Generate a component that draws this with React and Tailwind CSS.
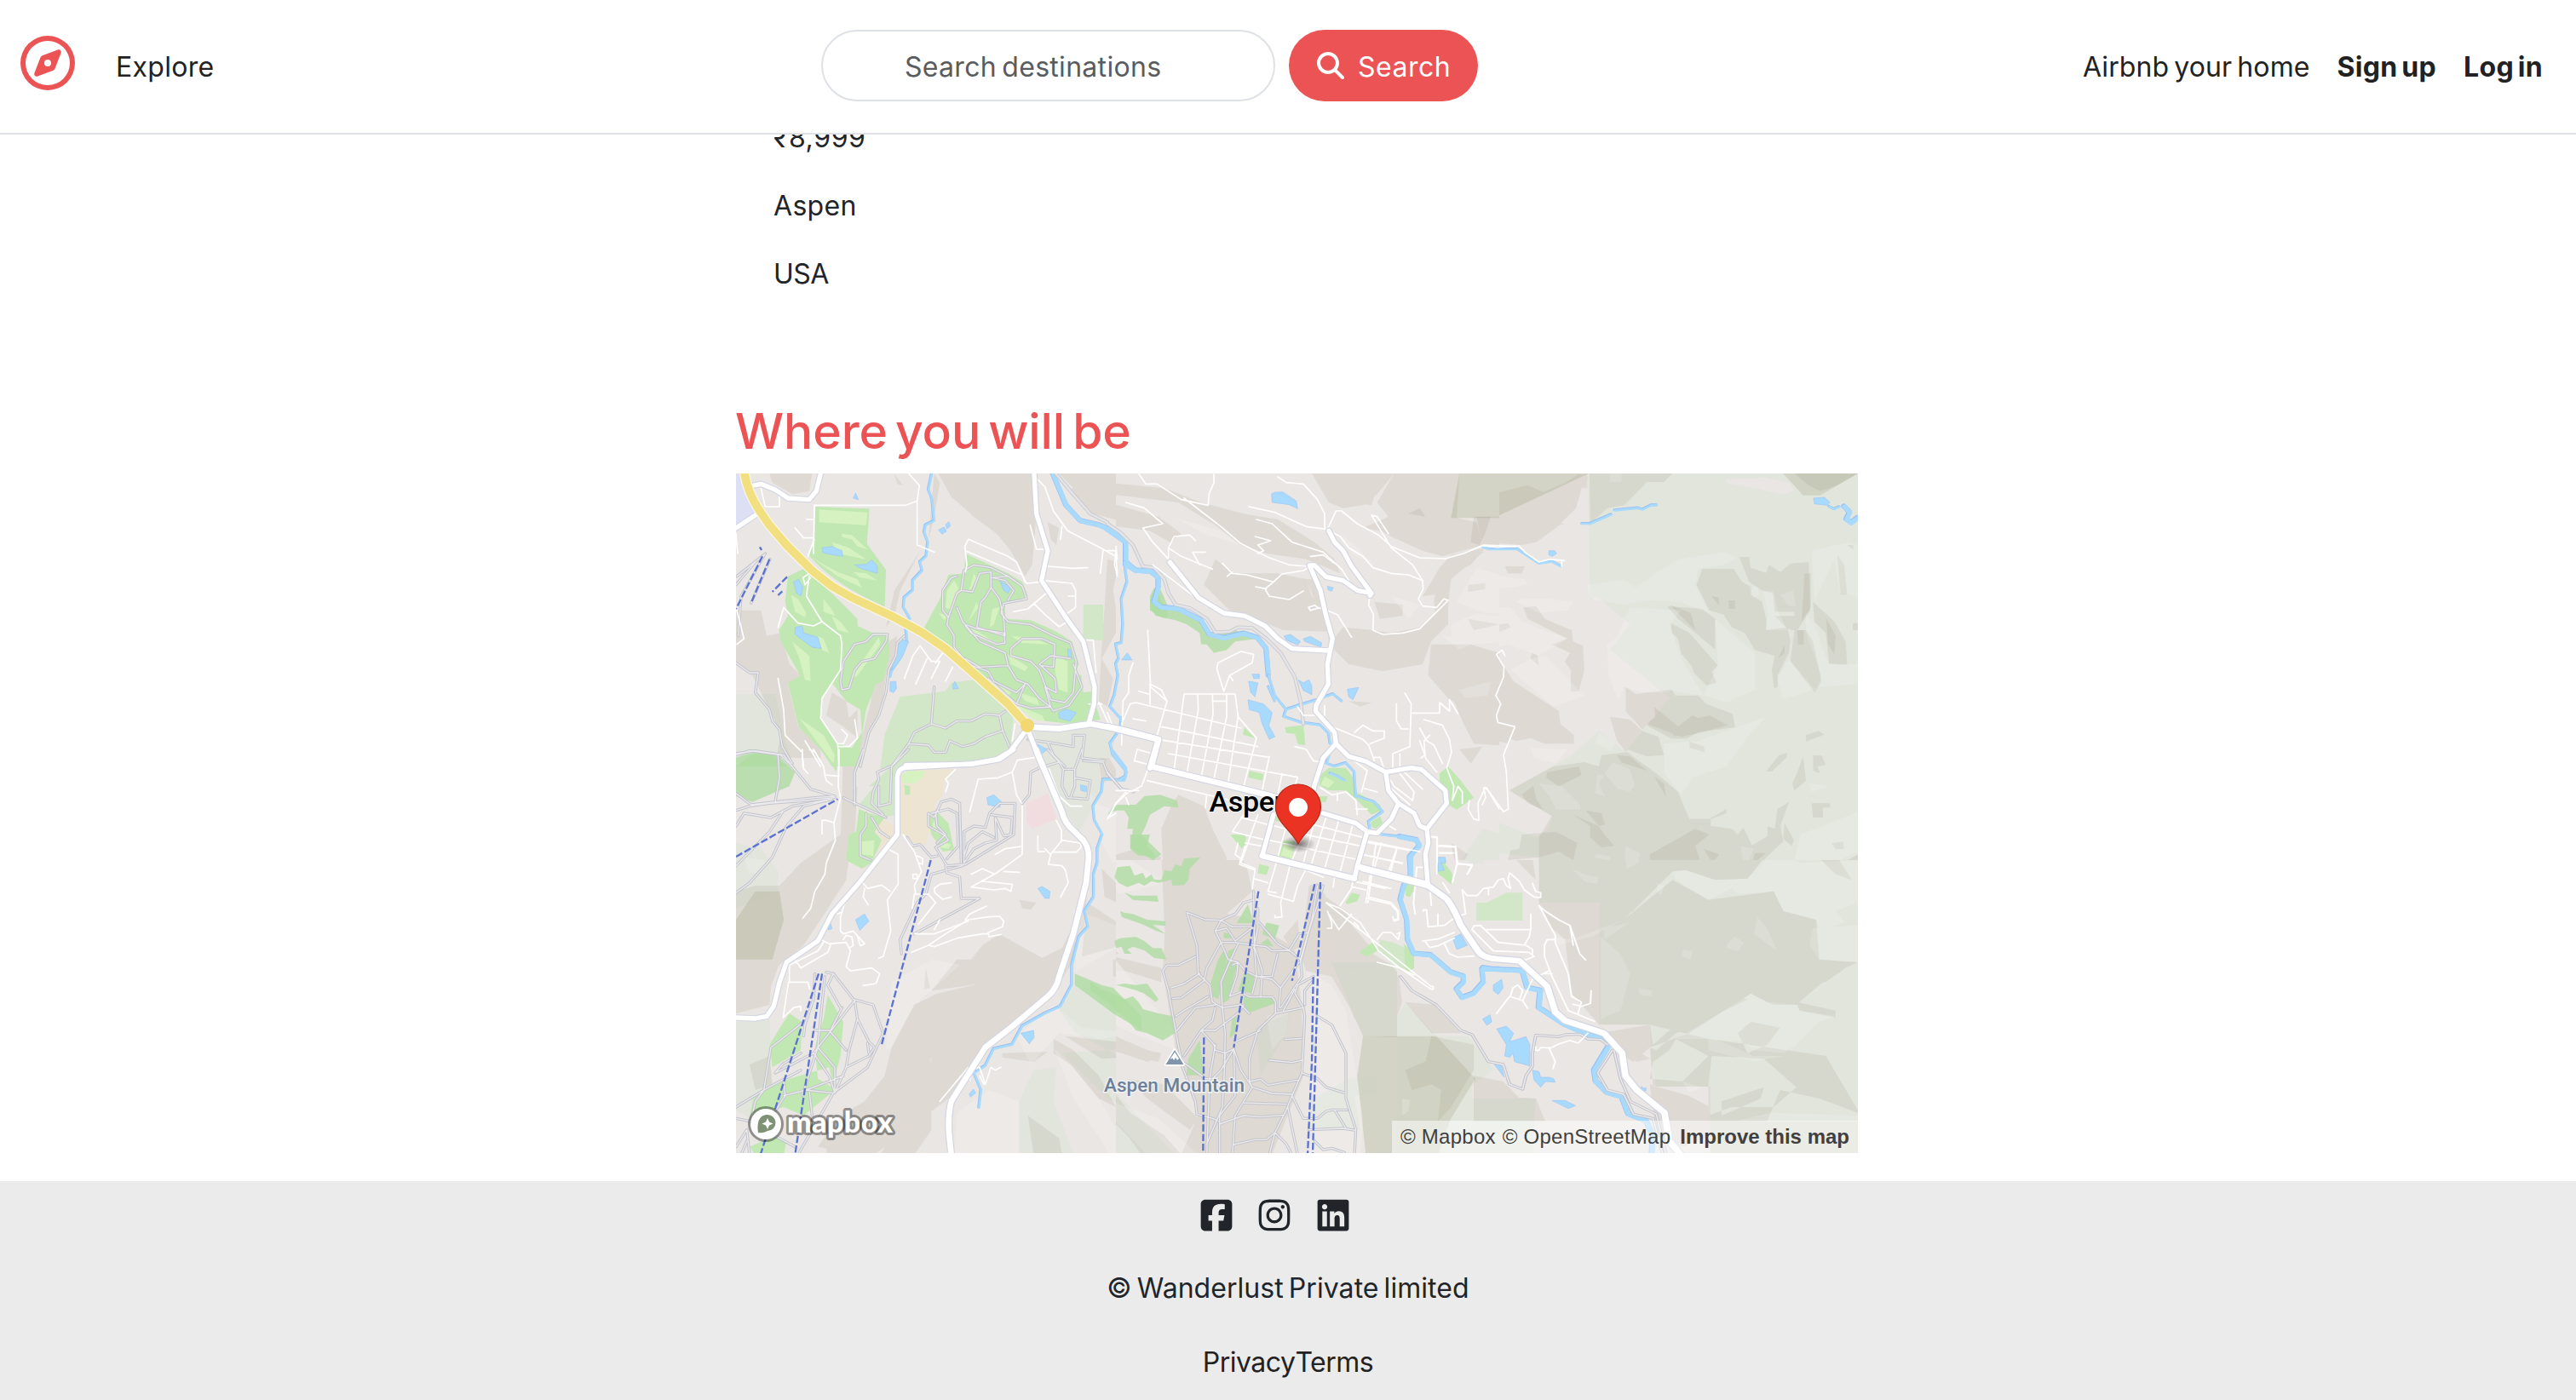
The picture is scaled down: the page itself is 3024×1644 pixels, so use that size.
import { FaRegCompass, FaMagnifyingGlass, FaSquareFacebook, FaInstagram, FaLinkedin } from "react-icons/fa6";

// Each survey sheet has its own local grid; the transform places it on the map.
const SHEETS = {
  nw: "translate(850 460) scale(.33333)",
  n: "translate(1300 540) scale(.33333)",
  ne: "translate(1740 540) scale(.33333)",
  sw: "translate(860 880) scale(.33333)",
  s: "translate(1280 980) scale(.33333)",
  se: "translate(1600 980) scale(.38265 .33333)",
};

// The part of the map that each sheet's terrain covers: x, y, width, height.
const CELLS = {
  nw: [864, 556, 446, 334],
  n: [1310, 556, 450, 454],
  ne: [1760, 556, 421, 454],
  sw: [864, 890, 446, 464],
  s: [1310, 1010, 330, 344],
  se: [1640, 1010, 541, 344],
};

function Layer({ paths, bounded, ...attrs }) {
  return (
    <g {...attrs}>
      {Object.entries(paths).map(([sheet, d]) => (
        <g key={sheet} clipPath={bounded ? `url(#cell-${sheet})` : undefined}>
          <path transform={SHEETS[sheet]} d={d} />
        </g>
      ))}
    </g>
  );
}

const reserve = {
  ne: "M373 48L380 497 402 480 522 580 450 668 660 838 505 1028 412 955 310 1045 95 1165 245 1255 235 1300 190 1330 40 1272 0 1300V1380L195 1400 200 1500H1323V48Z M855 68L862 82 1065 122 1098 108 1080 80 1000 62Z",
  n: "M1320 1300L1440 1330V1500H1330L1240 1420Z",
  se: "M250 0L330 105 370 100V65L540 85V240H725V670H880L885 795 900 888H1065V1128H1518V0Z M130 590L225 710H320L345 740 400 830 335 880V930H530L520 1128H0V900L80 700Z",
  sw: "M12 960L130 950 140 1240 60 1300 12 1270Z M12 330L100 350 160 430 160 500 12 560Z M1080 0H1340L1290 60 1300 150 1270 200 1220 290 1160 200Z M1205 830L1300 850 1440 980V1100L1380 1090 1210 1000 1150 920Z M1060 1130L1140 1120 1130 1240 1200 1428H1010V1240Z M1160 1070L1440 1050V1280L1320 1230Z",
  nw: "M42 1065H180L200 1150 240 1320H42Z M1090 1190L1290 1185 1380 1200 1360 1320H1130Z M1490 1110H1530L1520 1210 1475 1200Z",
  s: "M850 450H1120L1240 600 1200 710H960L930 640Z M0 850L80 900 300 1128H0Z M770 940L910 860 1010 850V920H930L950 1040 770 1030Z M580 680L700 630 690 700 600 850Z",
};
const oldForest = {
  ne: "M0 48H375L40 205H0Z M1323 48H1060L1130 125H1190Z",
  n: "M1240 48H1440V205H1210Z",
  s: "M960 710H1235L1380 870 1290 1128H970L940 850Z M1130 720L1230 740 1350 860 1240 980 1180 940 1060 1090 1000 960 1060 920 1020 880Z",
  se: "M0 710H225L345 860 270 1000 230 1128H0Z",
  sw: "M12 600L80 500H165L180 600 140 740 12 740Z",
};

const relief = {
  nw: "M755 288H1090L1100 430 1085 610 1060 650 1010 560 960 500 880 440 800 370Z M885 288H1085L1070 560 1040 520 980 400Z M1000 290H1080L1070 380 1040 380Z M1020 440L1080 460V570L1050 540Z M160 288H310L300 350 240 360 170 320Z M740 288L760 320 740 440 720 520 730 400Z M690 560L660 620 620 700 600 790 570 830 600 700 640 640Z M42 770L130 770 150 860 200 850 230 960 270 1000 225 1030 260 1180 340 1250V1320H180L200 1200 100 1000 42 960Z M80 860L190 880 240 1000 200 1020 90 930Z M580 880L610 860 600 940 570 1000 560 1080 530 1170 490 1250 480 1320H440L490 1200 520 1080 550 980Z M520 1060L550 1020 540 1130 515 1120Z M1180 288H1560V400L1470 390 1330 340 1240 350Z M1240 300L1330 330 1560 430V490L1450 470 1300 430 1220 360Z M1350 590L1390 600 1370 700 1390 830 1330 940 1370 1010 1350 1110 1320 1090 1330 900 1340 760Z M1140 460L1180 480 1170 540 1150 520Z M380 1060L430 1090 440 1150 470 1120V1220L420 1180 360 1140Z M600 290l30 40-20-5z M1390 470l40 30-20 20z",
  n: "M0 80L200 100 330 150 480 190 600 210 730 290 800 350 820 400 700 350 560 330 470 300 380 230 250 150 0 120Z M210 110L480 200 540 270 480 300 400 240Z M0 150L180 200 260 260 220 290 150 250 0 230Z M380 350L450 400 600 400 700 420 720 480 770 540 780 605 620 600 520 560 430 530 340 440Z M450 440L600 490 640 540 600 570 500 540Z M700 420H740L770 520 780 650 830 590 940 600 1000 610 1100 590 1200 500V580L1140 640 1110 720 970 745 850 720 800 670Z M720 48H1010L950 120 900 160 830 170 780 150Z M830 90L960 60 930 160 860 150Z M1010 48H1240L1230 200 1320 300 1180 340 1110 320 1020 280 960 250 900 240 990 200 950 150Z M1040 170L1210 130 1210 200 1300 220 1320 300 1180 310 1070 280 1150 250Z M1320 305L1440 300V200H1300Z M1210 335L1330 310 1280 370 1220 400 1190 470 1110 480 1170 380Z M1200 370L1330 320 1210 420 1195 560 1160 600 1150 490Z M940 500L1040 510V550L960 560Z M1140 650H1280L1440 700V900L1380 940 1300 900 1200 840 1130 760Z M1280 720L1340 680 1380 700 1370 770 1290 740Z M1180 770L1240 760V800L1180 810Z M1220 850L1360 880 1440 950V1010L1290 1000 1250 920Z M880 670L960 620 1090 640 1000 690Z M850 850L930 855 890 870Z M1270 560l110 20-90 20z M1270 440l60-5v20l-60 10z M250 1180L340 1220 370 1300 420 1400 400 1500H200L190 1300 220 1230Z M240 1200L300 1260 330 1400 300 1500H190L200 1330Z M100 1370L190 1400 140 1500H0V1400Z M0 690l20-20 10 90-30 90z M420 430l120 40v30l-90-20z M1240 1020l80-10-40 60z M1210 1350l60 40-40 60z",
  ne: "M378 48H670L640 78H580L530 130 500 160 440 170 380 225Z M0 205L370 48V100H350L330 170 260 240 190 290 140 300 0 290Z M0 130L160 90 230 120 340 50 375 60 260 190 180 250 90 260 60 240 0 230Z M80 240L160 250 200 220 290 225 170 260 150 290 70 265Z M230 160L320 175 270 205Z M145 520L190 515 220 560 315 600 320 640 355 655 360 740 340 815H312V740L290 710 310 680 245 650 300 630 160 560Z M0 590L90 575 100 590 0 630Z M80 375h70l-10 25h-50z M110 780L270 885 275 930 323 970V1000L220 1000 170 980 120 990 0 950V690L60 700Z M95 815L180 850 200 890 265 930V950L190 940 160 890 120 920 60 860Z M0 930L95 940V1000L0 980Z M0 690L50 700 20 750 0 745Z M90 900h30v20h-30z M505 800L540 825 660 810 660 838 565 950 505 885Z M450 905L520 915 565 955 505 1028 475 990Z M175 680l20 10 5 35-30-25z M775 384H885L915 430 950 450 945 475 985 500 1000 560 1000 600 1075 590 1085 640 1080 680 1040 760 1040 800 1028 805 1020 740 1030 690 960 670 925 610 880 590 850 545 800 530 755 440Z M905 342H940L945 380 1000 398 1010 370 1050 395 1085 365 1150 360 1155 530 1110 600 1090 600 1070 590 1030 550H1100V535H1030L1025 470 985 460 940 430Z M650 515L775 525 820 560V668L740 600 690 560Z M665 575L730 610 800 690 830 725 808 745 825 785 790 795 745 750 740 730 700 680 690 630 668 610Z M1165 500L1240 570 1280 640 1285 722 1222 718 1210 610 1170 570Z M1140 600L1165 640 1195 780 1172 820 1085 710 1100 600Z M640 815L668 810 680 830 760 830 790 860 882 895 890 942 760 960 720 982H665L580 935Z M512 1020L560 955 620 975 640 1040 580 1045Z M730 992L780 1010 785 1030 730 1015Z M250 1080L360 1065 410 1080 420 1040 510 1030 620 1110 690 1170 710 1220 730 1265H800L860 1230V1245L805 1265 805 1290 880 1300 900 1320 920 1295 950 1358 1005 1325V1290L1030 1300 1040 1230 1080 1205 1050 1290 1060 1345 1000 1400 940 1480 800 1475 700 1445 600 1500H200V1330L245 1255 95 1165Z M1250 335L1275 370 1285 475H1262Z M1140 970L1185 955 1205 968 1140 992Z M1000 1098L1045 1040 1075 1032 1070 1050 1020 1098Z M1130 1045L1140 1130 1100 1165 1092 1140 1110 1100Z M1165 1042H1195L1210 1075 1180 1080 1190 1105 1165 1095Z M1160 1210H1225V1225H1200L1200 1260 1165 1260Z M1065 1280L1098 1340 1090 1360 1060 1335Z M1230 1350l40-5 5 25-30 2z M1323 1390L1250 1430 1220 1500H1323Z M1285 300h22v18z M1305 575h18v25h-18z",
  sw: "M12 500L80 480 165 480 240 400 380 300 400 150 440 130 430 300 410 380 400 460 310 600 250 690 140 780 130 900 12 930Z M12 600L165 500 310 420 400 330 400 450 290 620 180 740H12Z M165 500L310 440 330 560 240 600 180 700Z M12 740L170 740 130 850 12 830Z M390 0H460L430 100 410 200 420 340 380 330 385 170Z M1160 700L1230 560 1250 480 1240 620 1190 760 1130 860 1100 880 1090 735Z M1090 735L1110 880 990 970 850 1090 760 1230 600 1350 500 1428H330L340 1330 430 1260 520 1210 560 1050 640 900 720 860 850 830 880 690 1010 690Z M1100 740L1080 830 960 920 880 1020 790 1040 700 1080 680 1180 560 1230 500 1290 440 1270 560 1120 700 1100 700 1050 850 850 1060 745Z M840 860L1000 800 1090 740 1080 830 960 910 870 1010 820 1000Z M350 1330L440 1290 460 1350 350 1410 300 1400Z M880 690L940 650 1010 690 900 800 840 830 700 850 790 740 840 740Z M560 1360L700 1250V1340L640 1428H520Z M680 770l15 70-20 5z M950 1070L1110 1065 1060 1100 950 1085Z M1130 1020L1200 1060 1290 1150 1350 1260 1290 1230 1190 1110 1130 1070Z M1170 1010L1440 1040V1080L1300 1090Z M1040 1290L1150 1370 1160 1428H1060Z M1310 0L1360 90 1300 120 1290 40Z M1300 420L1400 520 1440 530V580L1310 520Z M1250 540L1340 600 1430 640 1340 700 1230 730Z M1340 740L1440 760V800H1340Z M1010 530l60 10-20 25-30-5z M60 1110L130 1080 140 1180 80 1200Z",
  s: "M245 0H480L550 110 570 200 480 280 540 290 720 400 745 620 750 850 640 1128H320L380 990 300 760 255 480 270 200Z M250 60L330 40 400 130 350 250 370 430 290 470 260 300Z M265 150L340 180 340 270 370 430 260 470Z M300 480L390 500 410 600 400 690 330 790 300 640Z M410 480L460 390 480 440 430 560Z M640 600L590 680 520 720 510 680 560 640Z M500 700L650 640 600 700 530 790Z M740 650L745 840 640 1050 520 1080 540 950 600 850 660 800 700 720Z M600 840L740 780 720 880 640 910Z M770 180L800 170 830 220 900 270 960 400 1010 480 850 500 760 480 740 430Z M830 290L930 330 990 400 940 440 860 400Z M850 500L1020 480 1140 500 1230 600 1340 710 1230 720 960 710 920 620Z M940 600L1060 570 1090 640 1130 700 960 705Z M1050 620L1080 650 1040 700 1010 680Z M1170 650l30 20-30 40z M960 400L1060 460 1100 510 1000 560 900 460Z M1350 840L1440 880V1000H1300Z M0 840L60 880 140 980 260 1060 320 1128H180L60 960Z M130 860L260 880 380 1000 350 1040 200 930Z M30 410L60 380 100 420 60 430Z M80 430L250 470 250 520 120 480Z M0 670L110 720 250 780 200 800 80 760 0 740Z M150 750L250 770 240 800 180 790Z M60 990L160 1020 170 1100Z M680 360l50-60 10 100-30 5z M870 500L900 470 950 620 930 650Z M300 0h60l20 60-80 30z",
  se: "M420 0H1340L1260 40 1180 155 1080 160 990 125 950 130 800 300 725 330V245H540V85L370 65Z M800 300L950 160 1060 230 1260 200 1290 270 1390 300 1400 440 1518 450 1240 590 1190 560 1000 700 880 750 890 888H1065V1128H1518V970L1420 780 1300 760 1060 720 880 670H725V330Z M460 0H640L660 60 600 110 560 110 540 90 470 40Z M330 0L420 0 470 60 520 80 530 160 470 90 370 60Z M1060 0L980 60 880 190 800 300 720 340 730 250 780 230 820 120 860 90 930 0Z M970 70L1020 60 980 110 920 130 860 210 830 270 780 290 840 190 860 110Z M990 200L1080 320 1090 440 1040 400 920 380 860 320 880 300 840 270 950 230Z M860 420L960 440 1060 480 1070 520 1140 540 1130 580 1080 640 1000 650 900 570 870 520Z M1140 570L1180 580 1040 660 960 700 900 760 880 750 940 690 1040 650 1060 600Z M740 370L790 420 830 450 790 500 850 600 830 660 790 620 730 530Z M1060 480L1170 440 1260 450 1330 520 1370 500 1450 480 1330 600H1260L1190 560Z M1360 490L1480 470 1420 520 1360 530Z M1150 220H1260V270L1330 290 1340 330 1220 320 1160 260Z M1240 290L1290 370 1260 400 1220 330Z M960 720L1060 780 980 870 880 860 890 800 940 760Z M1070 780L1230 790 1280 840 1330 890 1260 960 1130 960 1060 990V880Z M1100 940L1230 890 1220 930 1100 990Z M1280 900L1400 930 1518 980V1010H1240Z M1330 590L1450 620 1450 645 1340 620Z M1190 660L1280 680 1240 740 1180 770 1150 700Z M880 880L900 888 1000 920 1065 960V1060L980 1100 900 1060Z M725 700L880 670 890 740 830 800 800 780Z M540 240L725 245V670L640 560 620 370 580 330Z M650 380L725 360V560L640 470Z M540 90L700 100 660 240H540Z M0 450L110 500 120 590 80 720 0 850Z M130 590L220 600 300 700H210Z M210 710L340 740 340 830 270 960 230 1010 240 900 180 860Z M130 830L190 800 240 870 150 900Z M340 850L430 870 490 940 530 930 560 1010 340 1010Z M400 920L530 930V1000L420 1010Z M730 680L880 790 840 800 780 740Z M1380 60L1450 70 1500 160 1450 140Z M1170 0H1250L1230 50 1180 30Z",
};
const reliefDeep = {
  ne: "M605 870L690 940 740 900 760 910 800 900 865 935 750 965 700 975 580 930 610 905Z M665 955l50 15-40 3z M230 1100L340 1080 350 1110 270 1150 225 1120Z M320 1250L410 1290 430 1320 465 1360 420 1365 380 1330 380 1290Z M365 1235l55 10 12 40-20 5z M480 1500L480 1440 590 1420 590 1390 750 1300 800 1320 750 1360 780 1450 690 1440 600 1500Z M600 1410L650 1370 720 1390 750 1430 690 1440 600 1500 560 1500Z M140 1320L260 1310 335 1350 320 1410 270 1380 200 1400 90 1410 100 1375 130 1370Z M1135 400L1157 400V520L1125 570Z M1110 600h22v50h-20z M1100 48H1323L1250 90 1190 110 1150 90Z M1150 48H1300L1190 80Z M660 510L735 540 750 600 700 550Z M1212 560L1245 620 1240 685 1218 650Z M140 1180L180 1148 190 1195 215 1232 160 1210Z M475 1040L520 1045 580 1095 490 1065Z M605 1115L640 1140 648 1188Z M780 1370L835 1390 810 1420Z M950 1425L960 1385 1000 1385Z M868 495h22v30h-22z M808 480l25 5v28z M1042 700L1065 650 1065 680Z M850 1458h80v22h-60z",
  n: "M1290 200H1350L1330 260 1310 300 1280 290Z M1060 190L1100 170 1120 200Z",
};
const highlights = {
  ne: "M0 400L150 420 160 440 60 455 0 430Z M140 490L240 490 320 500 300 530 200 540 120 500Z M0 520H100L140 570 300 630 200 690 90 650 0 680Z M100 740L170 700 220 690 360 830 250 870Z M440 650L520 590 660 820 560 820 500 800 480 850 445 760Z M370 440L500 420 540 450 640 380 690 350 850 325 900 345 850 370 760 385 750 440 800 540 700 500 590 495 500 510 380 490Z M520 520L700 530 660 580 700 700 780 830 640 810 455 668Z M820 560L960 680 960 810 860 855 780 830 830 720Z M1160 320L1290 290 1323 300V480L1260 470 1240 350 1170 500Z M1140 540L1170 580 1220 720 1323 720V790L1190 800 1060 845 1040 770 1080 700 1175 815 1195 760 1140 610Z M585 630L620 615 650 680 690 680 685 710 640 700 580 690Z M640 1000L760 990 1000 905 940 970 860 1080 740 1120 700 1180 640 1100Z M200 1140L280 1150 345 1215V1232H260L240 1190Z M460 1065L520 1090 538 1150 520 1168 480 1160 430 1105Z M405 1110h25l-20 30 22 45-35-10z M505 1360L555 1385 550 1440 500 1430Z M910 1360L955 1370 935 1430 920 1428Z M400 1388l50 8v14l-55-8z M315 1440L370 1460 405 1470 400 1495 360 1485Z M1150 1140L1220 1150 1160 1170Z M1120 1320L1323 1240V1380L1260 1410H1100Z M410 960L470 1000 450 1025 400 1000Z M170 1015L300 1020 260 1070 180 1050Z M990 462L1025 460 1040 530 1070 590 1075 600 1000 600 1005 540Z M1050 475L1095 460 1105 515 1080 515Z M940 450l30-5 5 30-20 12z M450 48H490V78H450Z",
  n: "M1210 580L1300 540 1440 560V640L1280 650 1210 630Z M1300 380L1440 420V540L1330 540 1230 500Z M240 205L400 250 470 300 340 260Z M1000 480L1100 510 1060 560Z M820 260L870 300 940 370 860 330Z M1180 620l120 20-60 30z M1240 810L1350 780 1340 830 1260 840Z",
  sw: "M560 820L700 740 800 760 700 850 640 900 560 1050 540 1060Z M1200 560L1350 620 1440 600V700L1350 700 1210 780Z M1130 900L1230 980 1400 1000 1300 1020 1150 1000 1050 1110 1000 1010Z M900 1200L1010 1240 1010 1428H780L790 1280Z M1130 1050L1200 1120 1310 1260 1400 1428H1330L1200 1230Z M1240 130L1300 200 1400 220 1440 350 1340 400 1300 330Z M40 380L120 390 110 430 60 440Z",
  s: "M0 480L120 480 300 700 300 760 100 680 0 600Z M40 0H120L130 80 260 170 100 210 30 100Z M0 900L100 950 240 1000 380 1128H200L60 980Z M760 480L850 530 900 620 930 800 960 1000 950 1128H770L800 640Z M620 640L700 610 690 700 640 760Z M900 20l60 5v10h-60z",
  se: "M950 130L990 125 1080 160 1180 155 1260 60 1340 100 1518 90V240L1450 270 1480 310 1400 340 1390 300 1290 270 1260 200 1150 210 1130 190 1060 230 960 160Z M1518 450L1420 520 1330 600 1340 620 1455 640 1400 660 1330 740 1290 770 1200 760 1160 730 1060 720 960 720 1080 640 1190 560 1240 590 1330 600 1450 500Z M1380 330L1518 320V450L1400 440 1370 390Z M800 50L850 60 845 100 810 120Z M640 120L680 140 720 150 720 175 680 165Z M900 170L925 180 915 215 905 205Z M1120 380L1140 360 1170 380 1150 410 1115 400Z M980 405L1010 410 1005 440 980 430Z M740 330L820 310 740 370Z M730 360L790 420 820 490 790 620 730 650Z M1210 290L1240 330 1270 410 1200 350Z M1060 710L1200 780 1290 780 1200 800 1060 760Z M980 870L1040 890 1000 910Z M1250 980L1518 990V1010H1140Z M700 70L755 75 750 85 720 85Z M580 360L640 370 800 300 700 360 600 390Z M120 930l25 5-5 40-20 15z M845 540l40 10v20l-35-5z",
};

const golf = {
  nw: "M322 405L512 412 503 535 570 628 566 757C480 720 370 660 298 575L318 520Z M225 650L285 622 310 650 380 710 470 800 470 825 520 848 580 850 583 930 560 1020 535 1030 500 1120 480 1250 475 1320H380L340 1260 262 1180 225 1025 268 1000 200 880 193 840 225 790 215 740Z M380 1025L345 1080 338 1150 400 1238 450 1255 485 1200 480 1120 430 1090Z M850 570L1000 640 1050 670 1070 720 990 750 990 800 1080 805 1170 845 1225 880 1250 960 1235 990 1258 1000 1265 1060 1295 1055 1325 1155 1220 1170 1130 1160 1030 1100 860 960 700 840 760 730 790 645 845 640Z",
  n: "M625 942L690 935 697 1005 672 1003 660 965 630 962Z M482 942L520 980 477 968Z M500 1095L550 1108 545 1130 495 1118Z M750 1110L780 1085 840 1085 870 1125 875 1170 960 1215 965 1235 930 1250 880 1200 840 1165 780 1165 745 1145Z M930 1275L960 1255 970 1280 945 1300 925 1290Z M745 1185h30l-5 20h-25z M585 1250l25 10v15l-25-3z M432 1320L490 1330 475 1370Z M620 1340L660 1345 650 1410 605 1395Z M535 1425L570 1435 560 1462 530 1455Z M1170 1105L1200 1080 1245 1130 1290 1190 1230 1232 1200 1215 1170 1150Z M1165 1400l30 10-10 35 30 15-2 35-52-40z",
  sw: "M445 210L480 225 535 240 500 290 525 320 490 400 455 420 400 390 410 300 435 290Z M720 220L760 260 780 355 740 360 700 300 685 230Z M605 125l20 5v30h-18z M335 865L390 960 380 1080 350 1190 300 1160 290 1050 320 950Z M200 930L245 960 240 1060 140 1120 130 1040 180 960Z M90 1210L200 1160 340 1120 360 1200 250 1290 180 1260 60 1290 75 1220Z M60 1400L150 1360 190 1380 180 1428H80Z M320 0H375L365 80Z M380 0H450L430 65Z",
  s: "M495 0H545V45L520 30Z M595 105L628 112 620 140 590 137Z M898 240L920 205 950 212 940 235 905 245Z M945 415L1000 375 1010 410 975 430Z M1105 385L1140 420V470L1120 485 1108 470Z M1110 175h38l-8 20-15 25-15-5z M1225 100l30 10 18 25-3 40-45-40z",
};
const fairway = {
  nw: "M335 415L505 425 500 470 335 460Z M415 500L450 505 505 555 470 545 450 520 415 512Z M380 530L440 550 500 590 400 570Z M310 585L400 635 470 660 485 690 400 650Z M455 635L500 640 540 665 480 655Z M350 730L385 775 390 790 350 775Z M235 715L260 730 290 780 285 795 250 775Z M240 880L300 930 305 1020 285 1015 265 940Z M330 860L350 870 370 920 345 910Z M380 790L410 810 440 850 400 840Z M545 865L550 890 470 1000 450 1010 500 930Z M265 1150L350 1210 390 1280 385 1310 340 1250Z M810 665L825 690 800 770 780 760 785 700Z M880 640L890 660 860 710Z M945 765L970 760 950 820 935 830Z M890 740L895 760 860 810Z M1010 860L1100 870 1140 890 1050 885Z M1000 925L1070 970 1060 985 1010 960Z M1170 930L1210 950V1060L1180 1050 1165 980Z M1040 1060L1100 1080 1110 1105 1060 1090Z M1030 1105L1120 1140 1130 1160 1090 1155Z M850 820L920 860 960 890 900 870Z M755 780L790 790 775 805Z M960 1030L1010 1060 1000 1075Z",
  n: "M765 1115L800 1135 780 1155 750 1145Z M625 1355L655 1360 650 1405 610 1393Z",
  sw: "M595 90L620 75H680L670 100 640 120 600 118Z M455 325L500 320 495 375 455 370Z M710 250L725 300 700 280Z M740 325L770 335 760 350 730 345Z",
};
const meadow = {
  nw: "M620 1075L780 1055 800 1025 880 1015 1020 1130 1010 1250 960 1290 640 1310 580 1330H550L565 1210Z M1265 750H1335V875H1265Z",
  sw: "M480 130L560 60 620 0H990L930 35 600 60 575 100V230L530 240 440 200 500 130Z",
  s: "M1020 370L1065 380 1110 400 1140 420V470L1120 485 1010 410Z",
  se: "M348 240L380 240 440 205H490V303H348Z",
};
const woods = {
  nw: "M42 1290Q100 1260 170 1280L225 1320H42Z M1500 720L1515 690 1560 770V797L1520 790 1500 760Z",
  n: "M180 440L215 520 260 525 340 580 350 615 400 610 450 600 530 630 450 640 420 670 375 680 350 650 330 650 325 610 280 580 240 565 190 555 150 530 150 500 160 470Z M0 1250L20 1220 40 1215 100 1215 130 1185 185 1180 245 1200 250 1225 200 1220 150 1250 135 1290 120 1320 140 1340 190 1390 160 1410 140 1395 110 1395 80 1370 90 1300 70 1300 75 1260 60 1235 30 1235Z",
  sw: "M12 60L70 15 160 20 220 80 200 130 70 185 12 165Z M1205 790L1300 830 1340 840 1440 940V990L1340 930 1205 830Z",
  s: "M85 150L95 115 140 110 155 145 185 135 195 155 215 140 225 158 250 160 262 125 285 130 300 105 320 112 330 85 388 80 350 120 345 160 330 178 290 180 285 160 240 170 215 165 190 180 170 170 130 185 100 170Z M120 205L150 215 235 215 240 237 150 230Z M140 0H210L200 40 225 70V90L180 70 140 45Z M105 270L120 275 150 280 200 300 265 305V322L220 318 265 350 230 338 180 315 110 290Z M85 375L105 365 160 360 190 375 220 400 250 400 268 440 225 435 190 408 150 395 130 405 145 420 120 420 110 395 90 400Z M90 530L120 525 160 530 200 525 240 580 230 590 190 560 160 548 110 535Z M0 520L40 545 80 560 120 580 150 570 170 590 185 615 240 630 290 640 298 700 255 725 200 700 160 690 130 650 90 620 60 590 0 550Z M515 312L555 245 575 312Z M620 310L665 320 650 370 605 350Z M600 385L625 365 645 395Z M425 520L450 440 475 400 480 460 450 580 430 570Z M520 395L490 440 515 460 490 580 460 600 455 530 480 450 485 410Z M545 480L578 500 570 560 520 550Z M540 570H640L650 595 560 628 540 610Z M500 650L515 640 510 700 490 718Z M385 725L400 848H338L345 790Z M470 345l25 5v15h-25z",
};

const rivers = {
  nw: "M1158 288L1180 340 1205 400 1255 455 1320 470 1380 495 1415 530 1415 600 1450 630 1510 635",
  n: "M0 245L65 290 65 370 100 390 150 392 180 415 180 450 165 500 190 520 250 525 330 565 360 615 410 628 480 612 530 628 560 665 568 760 M1030 1328L1090 1340 1100 1360 1065 1400 1070 1460",
  s: "M1130 75L1128 150 1105 180 1092 230 1115 300 1118 370 1140 420 1200 425 1270 485 1315 500 1315 520 1290 545 1310 575 1350 560 1385 520 1380 475 1440 475",
  ne: "M1275 165L1295 185 1283 210 1300 222 1323 205",
  se: "M370 470L395 475 490 480 505 540 545 550 540 610 620 670 700 710 750 725 M760 735L710 830 715 870 750 910 795 925 815 985 870 1010 890 1060 887 1128",
};
const creeks = {
  nw: "M732 288L720 345 733 380 740 455 710 470 705 495 718 530 712 580 690 600 698 630 665 665 665 700 635 725 632 760 655 800 640 830 645 880 620 940 590 985 585 1005 M1410 600L1420 670 1400 730 1405 820 1400 885 1380 890 1390 940 1380 960 1388 1000 1375 1070 1360 1110 1400 1155",
  n: "M568 760L590 830 630 880 690 860 740 845 795 825 825 850 M630 880L622 905 680 925 750 935 780 965 785 1000 M785 1030L772 1070 800 1080 840 1068 870 1100 875 1185 940 1205 970 1240 920 1275 925 1300 M960 1320L1030 1328 M50 910L45 950 10 1000 20 1040 68 1100 60 1130 0 1125 M568 800L590 850 M785 1105L810 1115 835 1130",
  ne: "M352 225H380L455 193 M467 178L550 170 565 175 595 160H615 M5 308L25 315H125L200 365 245 358 278 375 M1222 165L1240 174 1258 166",
  sw: "M1335 0L1385 65 1385 95 1360 108 1305 105 1300 150 1270 200 1275 250 1302 300 1285 350 1285 400 1272 440V520L1240 570 1252 625 1220 660 1195 760V830L1155 905 1100 930 1020 975 985 1040 920 1055 890 1115 850 1140 875 1200 868 1262",
};
const ponds = {
  nw: "M345 550L380 545 415 560 418 580 385 575 348 568Z M460 610L500 608 520 592 540 615 540 640 480 622Z M245 670L262 660 278 690 270 720 255 710Z M250 830L275 825 280 850 330 865 342 905 310 900 250 855Z M455 375L463 357 473 380Z M755 487l20-10 8 15-15 10z M780 468l12-10 5 15-12 10z M585 1022l20-2 2 25-10 15-13-5z M805 1035l8-15 12 25-18 3z M970 665L1010 690 1000 710 985 700Z M1210 905l10 5 5 30-13-8z M1178 1130L1205 1118 1240 1130 1220 1160 1180 1150Z M1100 1240L1138 1260 1115 1280Z M620 870L650 880 630 930 610 960 590 980Z",
  n: "M578 120L590 114 618 113 665 145 670 172 640 158 580 150Z M622 620L645 615 680 640 670 652 630 635Z M690 630L715 622 755 645 752 660 695 640Z M672 775L690 785 710 775 720 795V828L690 812Z M845 808L885 802 865 845 850 835Z M495 845L550 860 580 890 575 915 568 935 590 975 570 985 545 930 535 890 500 880Z M497 780L530 785 520 835 505 820Z M510 755L535 755V770H515Z M50 705L70 680 87 705Z M775 445l20 5-5 13-13-5z M1165 1400h25v20h-15l12 25-22 5z",
  ne: "M1167 135L1205 132 1225 150 1215 160 1170 155Z M235 320l20 0 7 10-15 10-12-5z",
  sw: "M895 170L920 160 948 185 940 205 900 195Z M1075 490L1090 483 1118 500 1115 525 1100 525Z M433 600L465 580 480 605 448 638Z M1015 1000L1060 990 1062 1015 1045 1037Z M833 1215l15-18 8 13-18 15z M1225 125l22 5v20l-20-5z M335 625l10-12 5 18-12 5z",
  se: "M400 530L425 510 430 540 415 563 400 550Z M367 650L390 635 395 660 380 672Z M410 685L440 675 462 700 450 730 500 712 512 740V815L465 800 460 770 450 785 435 780 440 740Z M520 830L540 835 545 855H570L585 860 590 872 560 870 545 890 525 865Z M403 810L425 815 433 855Z M580 937H620L652 955 630 965Z M845 890l5 5 5-8 5 8 8-3v11h-23z M275 365L300 350 320 390 288 405Z",
};

const trails = {
  nw: "M835 700L845 630 880 610 940 620 1000 650 1050 685 1065 730 985 745 975 780 1000 810 1080 820 1160 860 1220 885 1240 950 1230 1060 1200 1095 1150 1085 1110 980 1080 950 1010 930 1010 905 1050 870 1120 870 1165 890 1160 970 1120 965 M820 650L800 655 770 700 770 770 790 795 820 710 835 700 875 705 900 640 940 635V690L920 725 905 740 890 830 990 860 985 800 970 730 940 690 M1000 650L945 655 990 665 1020 700 1000 735 M850 825L870 850 960 890 990 885 985 850 890 835 855 822 M790 795L785 820 810 860 810 900 860 960 930 985 950 1020 1030 1060 1060 1030 1030 1100 930 1010 M820 760L840 810 900 880 990 920 1000 965 1030 1015 1070 1030 1110 1080 1150 1110 1130 1040 1170 1060 1165 1010 1110 960 1150 930 1220 940 M850 940L900 970 1000 965 M1030 1100L1080 1115 1150 1110 1160 1125 1215 1105 1260 1040 1230 960 M525 855L575 855 570 880 530 940 485 950 460 980 440 1045 415 1050 410 1020 420 950 460 890 500 880Z M635 860L610 885 605 930 580 980 570 1060 545 1140 510 1200 480 1320 M740 1040L730 1170 670 1200 650 1240 590 1320 M730 1170L780 1185 820 1160 870 1160 920 1135 970 1140 980 1190 1005 1250 M650 1240L720 1245 740 1270 780 1270 795 1230 840 1250 880 1240 920 1215 980 1195 M42 955L90 990 120 990 110 1060 160 1120 170 1160 195 1190 205 1250 240 1310 M42 1280L90 1265 200 1280 240 1320 M1070 1225L1140 1235 1230 1250 1230 1210 1270 1210 1260 1290 1340 1300 M1140 1235L1160 1280 1200 1320 M140 575L45 650 M110 600L42 680 M162 590L95 745 M145 570L60 720 50 860 M970 1140L990 1125",
  n: "M0 1100L50 1160 95 1168",
  sw: "M12 15L80 5 180 20 210 60 275 140 360 165 M160 20L165 100 150 185 M12 155L65 195 150 185 290 170 360 165 M12 215L60 200 130 190 260 180 360 170 M12 270L40 225 135 240 210 200 350 175 M12 410L130 290 180 215 M12 505L60 470 140 380 190 270 250 200 350 175 M390 170L540 240 M430 195L430 80 460 0 M555 60L510 80 515 105 495 150 490 190 530 230 M620 0L560 60 555 190 515 200 515 130 M470 225V270L450 300V375L485 390 M490 240L520 290 550 310 M615 310L635 340 660 335 700 380 720 375 M805 400L800 190 770 175 735 185 710 240 690 225V270L750 305 760 320 715 345 755 410 820 405 990 300 995 190 940 190 905 225 890 275 850 270 815 290 815 400 M700 225L760 210 790 225 795 340 755 385 M815 400L850 350 890 330 930 320 925 240 955 305 980 300 985 240 910 230 M815 375L830 330 880 290 920 310 M750 410L755 435 800 450 805 525 870 525 640 650 M810 410L700 440 680 510 650 540 590 670 595 720 M715 220L720 270 750 300 720 330 M1020 190L1045 160 1050 80 1080 65 1150 45 M1110 0L1150 45 1165 70 1160 130 1180 170 1250 175 1260 110 1205 100V70L1165 70 M1205 70L1230 0 M1190 170L1205 130V100 M1235 40L1305 45 1320 85 1370 140 1410 150 M290 790L285 880 255 970 250 1010 M325 800L300 1050 245 1220 M330 785L355 790 425 880 495 900 530 1000 475 1120 355 1210 230 1428 M355 790L335 830 380 910 M430 885L285 1070 150 1140 175 1110 240 1070 M290 990L340 990 400 1060 M430 885L440 950 410 1060 400 1120 360 1210 M285 1070L340 1150 360 1210 M440 950L480 1030 500 1050 480 1080 400 1120 M250 960L135 1050 110 1200 12 1260 M110 1200L240 1130 M180 1220L260 1200 390 1150 M270 1200L280 1290 M300 1050L360 1120V1200 M180 1170L185 1220 140 1290 M12 1300L60 1310 110 1340 220 1400 M255 1200L350 1210 M12 1400L50 1340 60 1428 M30 1428L50 1380 M475 1035L480 1070 M345 990L385 910 M65 1310L80 1240 110 1200",
  s: "M340 275L405 300 460 302 510 280 540 240 575 230 M340 275L375 390 380 490 420 530 430 590 465 610 530 600 560 630 M370 430L310 460 270 460 255 480 275 550 300 690 325 820 370 940 375 985 430 1000 M285 540L330 525 385 490 M290 578L320 575 400 515 M300 640L330 620 415 570 M305 690L370 610 440 600 M460 302L440 340 460 380 510 380 580 390 620 395 640 410 700 408 740 440 M460 302L500 325 575 325 M460 380L410 470 400 515 M460 380L485 440 520 450 M520 385L490 450 460 520 465 610 475 700 470 900 M575 200L578 400 585 500 570 560 M595 310L660 385 700 408 735 350 770 345 M580 400L605 480 600 570 M590 260V330L575 400 M490 570L530 555 560 572 640 572 652 590V630L750 610 M585 500H640L660 420 M520 450L545 480 585 500 640 510 670 540 665 610 M735 450L670 540 M740 440L745 500 670 610 M785 500L730 530 720 560 750 610 755 640 745 840 800 860 830 890 895 910 M755 600L755 550 780 520 M720 545L680 620 M652 630L590 690 560 790 560 870 570 890 M510 730L600 690 M505 755L530 830 570 890 M330 780L390 690 440 690 520 630 540 600 M440 610L430 655 390 690 435 740 440 760 475 770 505 755 460 830 430 860 400 860 M330 805L400 855 M440 740L420 860 410 1128 M475 770L465 960 410 1090 M505 755L510 920 455 990 455 1128 M685 722L745 718 M630 795L710 803 745 795 M560 870L600 862 625 883 730 865 M570 890L640 912 710 915 M540 945L690 950 M455 1020L540 990 600 995 680 988 M430 1000L455 1010 M570 890L510 990 500 1128 M745 840L710 920 690 970 650 1050 630 1128 M505 1092L580 1075 620 1075 650 1050 690 1090 710 1128 M710 920L750 1000H800L830 975 850 970H905 M800 640L850 670 900 770V930L935 1040 930 1128 M770 1040L890 1035 935 1042 M695 960L730 1128 M800 180L780 300 740 440 M820 180L770 340 740 450 M790 1080L820 1110 850 1105 895 1120 M860 970L900 1035 M440 340L480 330 510 375 575 325 M500 460L520 450 515 500 490 570",
  se: "M115 500L150 550 225 600 300 690 335 705 385 800 430 810 450 880 490 897 500 850 520 815 520 770 530 707 600 712 620 705 665 703 690 720 730 722 750 740 M765 760L720 840 750 900 800 915 830 985 890 1000 920 1128 M770 760L790 860 820 940 900 985 930 1128",
};
const lane = {
  n: "M0 225L45 255 90 300 125 375 165 380 200 420 215 470 240 510 290 522 350 560 380 608 430 605 460 590 510 592 560 630 610 680 660 765 680 850 690 930",
  nw: "M1168 288L1220 350 1290 430 1350 460",
};

const streets = {
  nw: "M315 570L318 400 640 400 680 385 688 330 650 288 M680 385V540L740 565 M295 580L318 520 M130 340L145 405H195V360 M290 450H315 M250 480L280 515H310 M1100 305L1130 335 1160 420 1210 490 1335 555 1380 580 1385 640 M1335 555L1325 640 M1190 475L1185 520 M1078 470L1100 555H1130 M850 560L1050 645 M1060 670L1030 600 1000 580 860 520 848 545 855 610 850 635 M1050 645L1065 675 1115 670 M1140 615L1230 622 1280 620 M1120 665L1225 675 1238 700V760L1210 780 M1212 720H1238 M1140 705L1070 765 1020 775 M1090 745L1130 785 1180 828 1210 810 M1270 875H1300L1310 990 M300 650L290 720 345 810 410 860 415 890 410 980 345 1080 340 1150 400 1240 405 1320 M300 640L278 655 285 680 305 655 M345 810L315 825 260 815 210 760 190 830 M190 1010L210 1120 215 1210 275 1270 280 1320 M285 1230L310 1270 340 1320 M460 1155L470 1220 440 1250H400 M415 1190L435 1210 420 1240H400 M635 1010L665 930 690 895 730 950 760 950 730 1010 M715 940L675 1030 M770 920L745 955 M805 970L780 1020 M1320 1095L1360 1180 M1285 1100H1330 M42 500L48 570 M45 770L70 870 45 890 M1380 545L1385 590 M1025 1170L1015 1230",
  n: "M270 825H450L460 905 525 980 M50 930L80 860 100 855 470 945 M190 940L530 1010 M180 985L570 1048 M105 1020L160 1035 M215 1035L670 1118 M105 1020L95 1060 150 1075 M90 912L135 920 M210 850L175 970 M270 825L235 1090 M318 825 320 880 280 1105 M370 825 372 895 330 1120 M420 825V905L375 1125 M460 905L425 1140 M525 980L480 1150 M570 1045L545 1165 M615 1105L600 1180 M670 1118L650 1180 M370 850H420 M150 860V790L190 810 210 850 M110 815L145 825 M145 1085L120 1150 80 1170 M140 1130L500 1215 M350 1180L345 1225 M480 1250L440 1310 560 1340 M530 1250L470 1420 520 1440 M470 1260L585 1290 M630 1290L600 1400 M680 1340L650 1410 M725 1290L690 1420 M770 1260L720 1420 M815 1270L765 1440 M865 1280L820 1450 M590 1290L720 1325 890 1360 M570 1340L890 1410 M725 1285L900 1330 M965 1350L940 1440 M1020 1365L990 1450 M900 1340L1100 1380 M895 1390L1040 1420 M110 48L135 85H175L260 140 355 160 358 120 375 80V48 M270 135L400 235 470 295 570 345 640 370 710 375 M65 150L130 170 195 225 125 240 160 290 215 350 215 310 235 270 290 265 310 285 M215 310L260 340 370 385 M325 370L300 325 345 325 M600 60L630 80 690 85 740 140 765 190V245 M498 165L590 185 700 235 775 245 805 180 825 180 880 225 955 265 1000 305 1100 345 1190 348 1260 328 1325 300 1440 305 M525 210L580 225 650 290 760 325 825 385 850 425 M715 340L760 335 800 365 M780 250L820 270 850 310 900 340 935 380 1000 400 1060 405 1110 425 1112 455 1095 490 1110 515 1160 520 1185 490 1200 495 1100 595 1040 610 970 615 935 600 937 545 920 510 925 475 M1110 425L1075 370 1000 310 930 195 950 200 990 260 M405 365L440 400 490 405 585 430 615 402 690 390 710 378 M440 395L422 410 M585 430L555 455 570 480 640 492 690 462 M522 447L560 455 M520 270L575 285 530 300 550 320 530 330 M760 525L740 520 730 512 708 520 715 530 745 522 M760 525L810 545 860 625 M160 370L350 515 M1400 690L1390 670 1370 685 1397 730 1395 765 1368 830 1385 860 1370 900 1375 925 1435 940 1395 1040 1405 1100 1412 1230 1395 1240 1345 1170 1330 1155 1305 1210 1308 1270 1290 1265 1270 1230 1275 1200 M1065 1010L1070 860 1048 822 M1018 860V920L1035 948H1060 M1070 892H1170V855L1205 885V845L1235 895 M1005 1100V1035L1065 1010 M1030 1035V1095 M1115 915L1180 935 1205 985 1212 1030 1195 1085 1220 1150 1215 1200 1235 1150 1250 1170V1210 M1100 945L1125 990 1150 1005 1180 1070 M1135 970L1115 990 1120 1050 1160 1100 M1100 990L1118 1040 1105 1050 M790 940L900 985 920 1005 940 1060 M870 960L900 935 935 955H975V980L925 1000 M940 1048H960L975 1090 M855 1050L915 1095 895 1170 M905 1158L950 1170 M985 1110L1010 1150 1075 1200 1080 1170 1030 1105 M990 1150L1065 1215 M1045 1100L1110 1160 M750 1155L790 1180 840 1170 875 1200 880 1250 M875 1230H915 M810 1175V1200 M390 715L470 675 515 685 510 715 430 760 410 815 385 735Z M430 760L442 778 M142 600L152 800 210 850 M90 715L75 760V820L55 850 50 1005 M0 320L30 320 25 370 35 410 M660 1010L700 1020 725 1060 750 1065 M1130 1328h30v130 M1160 1360L1225 1365 1230 1425H1285L1270 1455 M1170 1385H1220 M1230 1425L1215 1490 M0 1265L30 1210 80 1165 M65 1190L75 1215 M0 890L15 930 M765 865V900L690 900 670 870 M985 1285L1015 1303",
  ne: "M0 303L55 308 130 303 150 325 200 360 240 350 290 355 M280 375V358 M0 1215L12 1190 5 1155 15 1155 60 1230",
  sw: "M375 0L372 130 380 170 357 260 362 320 330 400 325 440 290 500 275 560 247 595 M357 258L330 250H315V298 M285 0L320 60 325 90 375 95 M245 0L248 65 265 85 M270 0L290 10 M325 90L330 110 350 125 M600 300L640 360 665 430 640 480 645 510H690L715 540 655 615 M650 375L670 385 668 405 655 400 M635 440h15v15h-15z M545 350L583 370V475L545 530 557 640 530 730 515 735 M455 465L475 490 525 478 555 500 M465 490L460 520 478 548 M395 540L380 590 380 640 390 650 425 640 465 685 450 692 440 660 M380 575L370 580 M310 670L340 685 400 680 415 710 400 765 415 780 490 770 518 790 505 825 460 832 M390 670L400 655 420 660 425 690 410 700 M345 690L335 715 240 770 220 740 M320 680L300 710 200 760V820H265L272 845 M197 820L178 945 215 910 240 905V920 M1020 200V370L930 435 840 485 920 495 960 490 980 500 985 475 880 465 M840 440L880 420 920 438 M955 430L1010 433 M925 370L960 350 1015 342 M835 220L865 105 935 100 985 80 1003 38 1068 28 M985 80L1000 160 1018 190 M785 70L750 105 760 120 750 150 M1075 305V360H1100 M1100 350L1120 370 1160 320 1225 330 1228 345 1210 362H1130 M1120 370L1112 405 1160 410 1172 425 1182 470 1155 520 M1140 250L1158 285V320 M630 715L690 690 750 650 830 600 900 590 940 588 955 605 950 625 900 645 903 660 945 652 M690 690L710 695 790 665 880 650 900 650 M820 600L835 580 895 552 M640 650H710L830 605 M710 635L730 600 M770 470L730 475 710 490 712 505 740 528 770 520 M730 1240L830 1120 835 1165 845 1130 870 1120 890 1180 910 1120 925 1130 945 1120 M870 1150L885 1180 M1100 65L1115 70 1150 165 1190 200 1230 200 M1430 145H1350 M1385 150L1350 190 1325 240 1350 225 M640 510L633 560",
  s: "M520 30L510 70 530 85 525 105 580 125 M545 40L530 90 M545 30L600 40 M580 125L570 190 M575 155L625 170 M655 100L625 200 655 205 M705 100L670 240 675 290 650 293V285 M755 130L730 180 715 235 625 210 M720 110L820 150 M860 150L855 185 M925 160L920 190 880 250 M925 185L970 195 M985 145L970 240 M930 165L1040 190 M980 220L1060 240 1085 270V300L1070 305 1065 290 M830 240L880 260 950 310 990 370 1015 410 1090 470 1200 545h8v-10h-8z M920 280L875 335 840 280 M835 270L850 310 850 330H835 M930 310L945 325 M1010 450L1090 470 1140 495 M1010 370L1030 345 1060 345 1085 370 1090 345 1080 350",
  se: "M540 250L560 270 600 300 635 320 645 390 M635 320L665 420 683 442 M540 250L590 355 590 380 630 490 640 570 670 590 660 630 M590 370L565 370 557 390V430L580 500 630 620 710 658 M700 550L698 595 670 605 645 598 M450 135L445 155 453 190 440 180 430 155 415 160 400 185 370 190 350 215H320L305 195 315 280 285 290 250 320 200 325 195 265 185 265V270 M385 190V212 M230 280V320 M450 135L480 165 495 195 525 220 545 222 545 205 530 200 520 172 M380 335H515V280 M515 335L510 360 495 390 M360 320L340 322 335 335 400 410 510 415 525 430 490 445H425 M360 320L415 380 500 390 520 405V425 M190 375L205 398 230 392 280 365 M250 385L265 420 290 432 340 428 M183 375L230 368 280 345 M410 630L450 570 490 585 520 510 570 480 M490 585L505 612 M452 570L460 540 475 530 490 550 480 582 M558 490H580 M530 748V760H540L545 750 575 752 600 738 635 725 660 735 690 700 M570 750L590 800 583 825 M215 10L228 10V100 M235 38L285 42 290 100 335 110 320 140 M290 100L275 165 M235 65H272 M165 115L155 240 160 280 M165 115H190 M40 30L15 240 M105 45L85 130 M0 25L140 55 M0 70L120 102 M0 165L85 190 M10 225L85 245 105 270 108 295 97 300 M205 190L210 250 M245 170L265 205",
};
const avenues = {
  nw: "M340 288L325 350 300 380 225 375 180 345 130 325 105 330 M42 480L125 425 M1092 288L1100 430 1140 560 1118 665 1200 790 1265 880 1305 1040 1303 1100 1285 1165 M1065 1190L1010 1265 960 1295 870 1312 640 1316 M1070 1190L1120 1320",
  n: "M220 360L320 485 410 540 485 550 555 585 600 630 650 665 780 672 M780 250L800 290 830 320 860 375 930 470 925 478 M930 470L880 460 830 425 770 412 730 372H712L750 460 770 550 793 630 775 720 778 790 735 865 733 885 800 960 805 1000 760 1050 728 1150 720 1200 M805 1000L850 1045 910 1062 980 1100 1070 1085 1105 1090 1190 1165 1195 1210 1125 1300 1130 1350 1120 1390 1128 1490 M980 1100L990 1165 1025 1210 1080 1245 1100 1290 1125 1300 M1025 1210L1000 1265 950 1315 915 1310 875 1280 760 1245 M915 1310L880 1430 870 1475 M545 1395L585 1250",
  sw: "M12 945L80 948 120 940 145 905 165 820 190 750 300 675 350 580 450 465 580 300V100Q582 66 610 64L850 50 940 35 990 0",
};
const arterials = {
  nw: "M1065 1180L1180 1187 1290 1170 1400 1190 1530 1225 1500 1325",
  n: "M0 940L180 985 155 1080 500 1165 620 1195 M870 1475L545 1395 M890 1435L1128 1495",
  sw: "M1068 0L1160 220Q1170 260 1200 285L1235 320Q1258 350 1253 390L1245 470 1200 650 1150 800Q1140 845 1110 870L980 980 890 1050 820 1160 770 1240Q758 1290 762 1350L770 1428",
  se: "M0 120L200 180 255 225Q275 250 300 320L350 405Q365 435 410 438L480 445 565 535 590 625 620 655 740 700 795 770 805 850 840 900 925 980 940 1080 975 1128",
};
const highway = {
  nw: "M72 288C80 340 100 380 122 415L160 470 220 540 310 630 380 685 450 725 600 795 700 850 780 905 860 975 1000 1100 1065 1172",
};
const lifts = {
  nw: "M135 580L42 765 M160 590L95 745 M222 652L170 705 M205 703L190 717 M126 547L132 558",
  sw: "M12 378L370 175 M698 390L525 1040 M303 790L98 1428 M315 790L220 1428",
  s: "M592 200L505 750 M790 175L710 515 M810 168L797 640 783 1128 M785 502L780 800 765 1128 M400 715L397 1128",
};

function TownMap() {
  const line = { fill: "none", strokeLinejoin: "round", strokeLinecap: "round" };
  return (
    <svg className="block h-[798px] w-[1317px] tracking-normal [word-spacing:0px]" viewBox="864 556 1317 798" role="img" aria-label="Map of Aspen">
      <defs>
        {Object.entries(CELLS).map(([name, [x, y, width, height]]) => (
          <clipPath key={name} id={`cell-${name}`}>
            <rect x={x} y={y} width={width} height={height} />
          </clipPath>
        ))}
        <radialGradient id="pin-shadow">
          <stop offset="0" stopColor="#000" stopOpacity=".5" />
          <stop offset="1" stopColor="#000" stopOpacity="0" />
        </radialGradient>
      </defs>
      <rect x="864" y="556" width="1317" height="798" fill="#eae6e3" />
      <Layer bounded paths={reserve} fill="#e1e5dc" fillRule="evenodd" />
      <Layer bounded paths={oldForest} fill="#cdcfbe" fillOpacity=".8" />
      <Layer paths={{ nw: "M42 288H55L75 350 110 425 42 470Z" }} fill="#dde0f5" />
      <Layer bounded paths={relief} fill="#8f7f64" fillOpacity=".12" />
      <Layer bounded paths={reliefDeep} fill="#857a66" fillOpacity=".12" />
      <Layer bounded paths={highlights} fill="#fff" fillOpacity=".16" />
      <Layer paths={meadow} fill="#d2e6c8" />
      <Layer paths={{ sw: "M595 85L640 70H785L745 110 740 160 710 195 720 230 690 300 680 335 640 330 575 290V120Z M530 245L575 275 560 310 505 365 520 310 500 280Z" }} fill="#ede5d2" />
      <Layer paths={{ sw: "M1035 190L1110 155 1140 245 1055 280 1035 255Z" }} fill="#f1dde0" />
      <Layer paths={golf} fill="#c1e8b2" fillRule="evenodd" />
      <Layer paths={fairway} fill="#d6f2c0" />
      <Layer paths={woods} fill="#afdca3" fillOpacity=".8" />
      <Layer paths={rivers} {...line} stroke="#96bdf6" strokeWidth="18" transform="translate(-.6 -.6)" />
      <Layer paths={rivers} {...line} stroke="#a8dafd" strokeWidth="16" />
      <Layer paths={creeks} {...line} stroke="#96bdf6" strokeWidth="9" transform="translate(-.6 -.6)" />
      <Layer paths={creeks} {...line} stroke="#a8dafd" strokeWidth="8" />
      <Layer paths={ponds} fill="#a8dafd" stroke="#96bdf6" strokeWidth="1.5" />
      <Layer paths={trails} {...line} stroke="#c2c4cc" strokeWidth="10" />
      <Layer paths={trails} {...line} stroke="#eceaec" strokeWidth="4" />
      <Layer paths={lane} {...line} stroke="#c6c8cf" strokeWidth="13" />
      <Layer paths={lane} {...line} stroke="#e4e3e6" strokeWidth="8" />
      <Layer paths={streets} {...line} stroke="#fff" strokeWidth="5" />
      <Layer paths={avenues} {...line} stroke="#d3d6e2" strokeWidth="23" />
      <Layer paths={arterials} {...line} stroke="#d3d6e2" strokeWidth="27" />
      <Layer paths={avenues} {...line} stroke="#fff" strokeWidth="16" />
      <Layer paths={arterials} {...line} stroke="#fff" strokeWidth="20" />
      <Layer paths={highway} {...line} stroke="#fbf7e8" strokeWidth="36" />
      <Layer paths={highway} {...line} stroke="#f2e080" strokeWidth="29" />
      <circle cx="1206" cy="852" r="8" fill="#f2d870" />
      <Layer paths={lifts} fill="none" stroke="#5a72d2" strokeWidth="7" strokeDasharray="25 9" />

      <g>
        <path d="M1379 1233L1389.500 1250H1368.500Z" fill="#8094aa" stroke="#fff" strokeWidth="3.500" strokeLinejoin="round" paintOrder="stroke" />
        <path d="M1379 1235.500L1384 1243 1382 1245 1380 1242 1378 1245 1376 1242 1375 1244 1374 1243Z" fill="#fff" />
      </g>
      <text x="1296" y="1282" textLength="165" fontSize="22.500" fontWeight="500" fontFamily="Roboto, sans-serif" fill="#6c8099" stroke="#eef0f2" strokeWidth="3" paintOrder="stroke">Aspen Mountain</text>
      <text x="1419.500" y="952.500" textLength="95" fontSize="34" fontWeight="500" fontFamily="Roboto, sans-serif" fill="#000" stroke="#f4f2f0" strokeWidth="2" paintOrder="stroke">Aspen</text>

      <ellipse cx="1524" cy="991" rx="20" ry="10" fill="url(#pin-shadow)" />
      <path d="M1524 991C1517 976 1497.500 966 1497.500 947.500A26.500 26.500 0 0 1 1550.500 947.500C1550.500 966 1531 976 1524 991Z" fill="#ea3323" stroke="#b8281b" strokeWidth="1.200" />
      <circle cx="1524" cy="948" r="11" fill="#fff" />

      <g>
        <circle cx="899" cy="1320" r="21" fill="#000" fillOpacity=".38" />
        <circle cx="899" cy="1320" r="18" fill="#fff" />
        <path d="M890 1330C888 1315 893 1309 901 1309A9.500 9.500 0 0 1 901 1328Q896 1331 890 1330Z" fill="#7f9275" />
        <path d="M901 1313l2 4.500 4.500 2-4.500 2-2 4.500-2-4.500-4.500-2 4.500-2z" fill="#fff" />
        <text x="924" y="1330" textLength="124" fontSize="34" fontWeight="900" fontFamily="Lato, sans-serif" fill="#fff" stroke="#000" strokeOpacity=".38" strokeWidth="6" strokeLinejoin="round" paintOrder="stroke">mapbox</text>
      </g>
    </svg>
  );
}

export default function App() {
  return (
    <div className="flex h-[1644px] w-[3024px] flex-col overflow-hidden bg-white font-[Inter,sans-serif] text-[32px] leading-[48px] tracking-[0.3px] text-[#212529] [word-spacing:-3px]">
      <header className="relative z-10 grid h-[158px] shrink-0 grid-cols-[964px_771px_1fr] items-start border-b-2 border-[#dee2e6] bg-white text-[#222222]">
        <div className="flex items-start pl-6">
          <FaRegCompass className="mt-[42px] size-16 text-[#eb5355]" />
          <span className="ml-12 mt-[55px]">Explore</span>
        </div>
        <div className="mt-[35px] flex gap-4">
          <div className="flex h-[84px] w-[533px] items-center rounded-full border-2 border-[#dee2e6] pl-24 pt-[3px] text-[#595c5f]">Search destinations</div>
          <button className="flex h-[84px] w-[222px] items-center gap-4 rounded-full bg-[#eb5355] pl-[33px] tracking-[0.5px] text-white">
            <FaMagnifyingGlass className="size-8" />
            <span className="pt-[3px]">Search</span>
          </button>
        </div>
        <nav className="mt-[55px] flex justify-end gap-8 pr-[39px]">
          <span className="tracking-[0.1px]">Airbnb your home</span>
          <b>Sign up</b>
          <b>Log in</b>
        </nav>
      </header>
      <main className="flex h-[1229px] shrink-0 flex-col pl-[864px]">
        <div className="-mt-[20px] flex flex-col gap-8 pl-[44px]">
          <p className="tracking-[0.6px]">₹8,999</p>
          <p>Aspen</p>
          <p className="-tracking-[0.5px]">USA</p>
        </div>
        <h2 className="-ml-px mt-[127px] h-[83px] text-[57px] font-medium leading-[68px] -tracking-[0.1px] text-[#eb5355] [word-spacing:-6px]">Where you will be</h2>
        <div className="relative w-[1317px]">
          <TownMap />
          <div className="absolute bottom-0 right-0 flex h-[38px] w-[547px] items-center gap-2 bg-white/50 pl-[10px] font-['Liberation_Sans',sans-serif] text-[24px] leading-none tracking-[0.25px] text-[#404040] [word-spacing:0px]">
            <span>© Mapbox</span>
            <span>© OpenStreetMap</span>
            <b className="ml-[3px] tracking-normal">Improve this map</b>
          </div>
        </div>
      </main>
      <footer className="flex flex-1 flex-col items-center bg-[#ebebeb]">
        <div className="mr-[32px] mt-[19px] flex gap-[26.5px]">
          <FaSquareFacebook className="size-[42px]" />
          <FaInstagram className="size-[42px]" />
          <FaLinkedin className="size-[42px]" />
        </div>
        <p className="mt-[41px]">
          <span className="tracking-[0.05px]">© Wanderlust Private limited</span>
        </p>
        <div className="mt-[39px] flex -tracking-[0.5px] text-[#222222]">
          <span>Privacy</span>
          <span>Terms</span>
        </div>
      </footer>
    </div>
  );
}
